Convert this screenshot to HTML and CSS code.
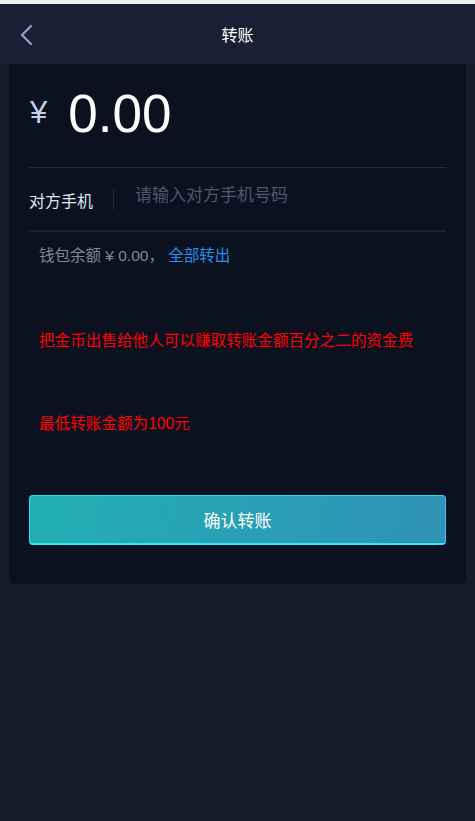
FILE: index.html
```html
<!DOCTYPE html>
<html lang="zh-CN">

<head>
    <meta charset="UTF-8">
    <meta name="viewport" content="width=device-width, initial-scale=1.0">
    <title>转账</title>
    <link rel="stylesheet" href="styles.css">
</head>

<body>
    <div class="top-strip"></div>
    <header class="nav-bar">
        <a class="back-btn" href="#">
            <svg width="14" height="22" viewBox="0 0 14 22">
                <path d="M12 2 L3 11 L12 20" fill="none" stroke="#8fa3c8" stroke-width="2.2" stroke-linecap="round" stroke-linejoin="round" />
            </svg>
        </a>
        <h1>转账</h1>
    </header>

    <div class="transfer-card">
        <div class="amount-row">
            <span class="currency">¥</span>
            <span class="amount">0.00</span>
        </div>

        <div class="phone-row">
            <label for="phone">对方手机</label>
            <span class="split"></span>
            <input type="tel" id="phone" placeholder="请输入对方手机号码">
        </div>

        <p class="balance">钱包余额 ¥ 0.00， <a href="#">全部转出</a></p>

        <p class="notice notice-first">把金币出售给他人可以赚取转账金额百分之二的资金费</p>
        <p class="notice notice-second">最低转账金额为100元</p>

        <button class="confirm-btn" type="button">确认转账</button>
    </div>
</body>

</html>
```

FILE: styles.css
```css
* {
    box-sizing: border-box;
}

body {
    margin: 0;
    padding: 0;
    min-height: 821px;
    background: #161c29;
    font-family: "Liberation Sans", "Noto Sans CJK SC", sans-serif;
    color: #ffffff;
}

.top-strip {
    height: 4px;
    background: #eceef2;
}

.nav-bar {
    height: 60px;
    background: #1a2033;
    display: flex;
    align-items: center;
    justify-content: center;
    position: relative;
}

.nav-bar h1 {
    margin: 0;
    font-size: 16px;
    font-weight: normal;
    color: #ffffff;
}

.back-btn {
    position: absolute;
    left: 19px;
    top: 20px;
    display: flex;
}

.transfer-card {
    margin: 0 9px;
    background: #0c1120;
    border-radius: 0 0 5px 5px;
    padding: 0 20px 39px;
}

.amount-row {
    display: flex;
    align-items: baseline;
    height: 104px;
    padding-top: 21px;
    border-bottom: 1px solid #242b3c;
}

.currency {
    font-size: 31px;
    color: #c3d0ea;
    margin-left: 1px;
    margin-right: 21px;
    position: relative;
    top: -9px;
}

.amount {
    font-size: 53px;
    color: #ffffff;
    line-height: 1.1;
}

.phone-row {
    display: flex;
    align-items: center;
    height: 64px;
    border-bottom: 2px solid #1c2232;
}

.phone-row label {
    font-size: 16px;
    color: #dfe7f7;
    width: 84px;
    position: relative;
    top: 1px;
}

.split {
    width: 1px;
    height: 22px;
    background: #1f2535;
    margin-right: 21px;
}

.phone-row input {
    flex: 1;
    background: transparent;
    border: none;
    outline: none;
    font-family: inherit;
    font-size: 17px;
    color: #ffffff;
    padding: 0;
    position: relative;
    top: -3px;
}

.phone-row input::placeholder {
    color: #4b5871;
}

.balance {
    margin: 13px 0 0 10px;
    font-size: 15.5px;
    line-height: 22px;
    color: #7d889e;
}

.balance a {
    color: #2391f5;
    text-decoration: none;
}

.notice {
    margin: 0 0 0 10px;
    font-size: 15.6px;
    line-height: 22px;
    color: #ff0000;
}

.notice-first {
    margin-top: 63px;
}

.notice-second {
    margin-top: 61px;
}

.confirm-btn {
    display: block;
    width: 100%;
    height: 50px;
    margin-top: 60px;
    border: 1px solid #2fe0f0;
    border-right-color: #3cc6f2;
    border-bottom: 2px solid #2fe8f8;
    border-radius: 4px;
    background: linear-gradient(100deg, #22b0b4, #2f91b6);
    color: #ffffff;
    font-family: inherit;
    font-size: 17px;
    cursor: pointer;
}
```
